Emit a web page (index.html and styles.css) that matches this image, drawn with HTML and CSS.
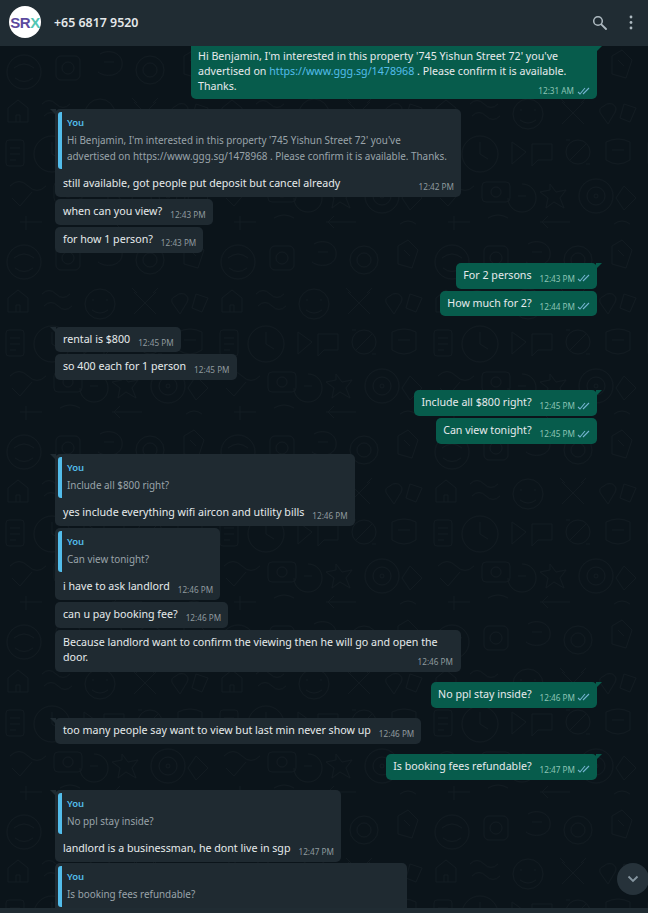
FILE: index.html
```html
<!DOCTYPE html>
<html lang="en">
<head>
<meta charset="utf-8">
<title>Chat</title>
<link rel="stylesheet" href="styles.css">
</head>
<body>
<div class="app">
  <header class="header">
    <div class="avatar"><span class="sr">SR</span><span class="x">X</span></div>
    <div class="name">+65 6817 9520</div>
    <svg class="icon search" viewBox="0 0 15 15" width="15" height="15"><circle cx="6" cy="6" r="4.300" fill="none" stroke="#aebac1" stroke-width="1.500"/><path d="M9.300 9.300l4.700 4.700" stroke="#aebac1" stroke-width="1.800" stroke-linecap="round"/></svg>
    <svg class="icon menu" viewBox="0 0 4 15" width="4" height="15"><circle cx="2" cy="2" r="1.400" fill="#aebac1"/><circle cx="2" cy="7.500" r="1.400" fill="#aebac1"/><circle cx="2" cy="13" r="1.400" fill="#aebac1"/></svg>
  </header>
  <main class="chat">
    <svg class="doodles" width="648" height="862" aria-hidden="true">
      <defs>
        <pattern id="doodle" width="214" height="190" patternUnits="userSpaceOnUse">
          <g fill="none" stroke="#121b21" stroke-width="1">
            <circle cx="24" cy="26" r="17"/><path d="M14 22q10-8 20 0M15 32q9 7 18 0"/>
            <rect x="56" y="10" width="24" height="24" rx="5"/><circle cx="68" cy="22" r="6"/>
            <path d="M100 8c10-6 24 0 22 12-2 10-16 12-24 6M104 16h10"/>
            <circle cx="150" cy="24" r="14"/><circle cx="150" cy="24" r="7"/>
            <path d="M184 10l10-6 10 10-6 18-14-4zM190 14l6 6"/>
            <path d="M8 62l10-8 10 8v14H8zM16 76v-7h4v7"/>
            <path d="M42 58q7-7 14 0t14 0M44 70q7-7 14 0t14 0"/>
            <circle cx="100" cy="68" r="15"/><path d="M92 64h2M106 64h2M92 74q8 6 16 0"/>
            <path d="M134 56l22 22M156 56l-22 22M132 52l5 5M158 52l-5 5"/>
            <path d="M176 60c6-6 16 0 10 8l-6 10-7-10c-2-3-2-6 3-8zM196 58l12 4-6 14-10-4z"/>
            <rect x="6" y="94" width="18" height="26" rx="3"/><path d="M10 102h10M10 108h10M10 114h6"/>
            <circle cx="52" cy="108" r="18"/><path d="M52 96v12l8 5"/>
            <path d="M84 96l14 10-14 12zM104 98h20v16h-14l-6 6z"/>
            <circle cx="150" cy="106" r="12"/><path d="M142 114l16-16M138 94h4M158 118h4"/>
            <path d="M178 96q12-6 24 0v18q-12 8-24 0zM184 104h12"/>
            <path d="M10 140q9-9 18 0t18 0M12 152l8 8 12-14"/>
            <rect x="54" y="136" width="28" height="20" rx="4"/><circle cx="68" cy="146" r="5"/>
            <path d="M94 138c8 0 14 6 14 14s-6 14-14 14-14-6-14-14M90 150h8"/>
            <path d="M122 138l6 8 10-2-6 8 4 10-10-6-8 6 2-10-8-6 10-2z"/>
            <circle cx="168" cy="150" r="17"/><circle cx="168" cy="150" r="9"/><circle cx="168" cy="150" r="2"/>
            <path d="M196 140l12 12-12 12-8-12zM20 176h22M26 170v14M60 172q10-6 20 0M112 176h30M120 170l-6 6 6 6M186 178q8-6 16 0"/>
          </g>
        </pattern>
      </defs>
      <rect width="648" height="862" fill="url(#doodle)"/>
    </svg>
    <div class="thread">
      <section class="group out first">
        <div class="bubble long tail">
          <div class="text">Hi Benjamin, I'm interested in this property '745 Yishun Street 72' you've<br>advertised on <span class="link">https://www.ggg.sg/1478968</span> . Please confirm it is available.<br>Thanks.</div>
          <div class="meta stacked"><span>12:31 AM</span><svg class="ticks" viewBox="0 0 13 8" width="13" height="8"><path d="M1 5l2 2L8 1M6 7l6-6" fill="none" stroke="#74b3d0" stroke-width="1.100"/></svg></div>
        </div>
      </section>

      <section class="group in">
        <div class="bubble reply wide-reply tail">
          <div class="quote"><div class="you">You</div><div class="qtext">Hi Benjamin, I'm interested in this property '745 Yishun Street 72' you've<br>advertised on https://www.ggg.sg/1478968 . Please confirm it is available. Thanks.</div></div>
          <div class="body"><span class="text">still available, got people put deposit but cancel already</span><span class="meta wide">12:42 PM</span></div>
        </div>
        <div class="bubble line"><span class="text">when can you view?</span><span class="meta">12:43 PM</span></div>
        <div class="bubble line"><span class="text">for how 1 person?</span><span class="meta">12:43 PM</span></div>
      </section>

      <section class="group out">
        <div class="bubble line tail"><span class="text">For 2 persons</span><span class="meta">12:43 PM<svg class="ticks" viewBox="0 0 13 8" width="13" height="8"><path d="M1 5l2 2L8 1M6 7l6-6" fill="none" stroke="#74b3d0" stroke-width="1.100"/></svg></span></div>
        <div class="bubble line"><span class="text">How much for 2?</span><span class="meta">12:44 PM<svg class="ticks" viewBox="0 0 13 8" width="13" height="8"><path d="M1 5l2 2L8 1M6 7l6-6" fill="none" stroke="#74b3d0" stroke-width="1.100"/></svg></span></div>
      </section>

      <section class="group in">
        <div class="bubble line tail"><span class="text">rental is $800</span><span class="meta">12:45 PM</span></div>
        <div class="bubble line"><span class="text">so 400 each for 1 person</span><span class="meta">12:45 PM</span></div>
      </section>

      <section class="group out">
        <div class="bubble line tail"><span class="text">Include all $800 right?</span><span class="meta">12:45 PM<svg class="ticks" viewBox="0 0 13 8" width="13" height="8"><path d="M1 5l2 2L8 1M6 7l6-6" fill="none" stroke="#74b3d0" stroke-width="1.100"/></svg></span></div>
        <div class="bubble line"><span class="text">Can view tonight?</span><span class="meta">12:45 PM<svg class="ticks" viewBox="0 0 13 8" width="13" height="8"><path d="M1 5l2 2L8 1M6 7l6-6" fill="none" stroke="#74b3d0" stroke-width="1.100"/></svg></span></div>
      </section>

      <section class="group in">
        <div class="bubble reply tail">
          <div class="quote"><div class="you">You</div><div class="qtext">Include all $800 right?</div></div>
          <div class="body"><span class="text">yes include everything wifi aircon and utility bills</span><span class="meta">12:46 PM</span></div>
        </div>
        <div class="bubble reply">
          <div class="quote"><div class="you">You</div><div class="qtext">Can view tonight?</div></div>
          <div class="body"><span class="text">i have to ask landlord</span><span class="meta">12:46 PM</span></div>
        </div>
        <div class="bubble line"><span class="text">can u pay booking fee?</span><span class="meta">12:46 PM</span></div>
        <div class="bubble long-in">
          <div class="text">Because landlord want to confirm the viewing then he will go and open the<br>door.</div>
          <div class="meta stacked">12:46 PM</div>
        </div>
      </section>

      <section class="group out">
        <div class="bubble line tail"><span class="text">No ppl stay inside?</span><span class="meta">12:46 PM<svg class="ticks" viewBox="0 0 13 8" width="13" height="8"><path d="M1 5l2 2L8 1M6 7l6-6" fill="none" stroke="#74b3d0" stroke-width="1.100"/></svg></span></div>
      </section>

      <section class="group in">
        <div class="bubble line tail"><span class="text">too many people say want to view but last min never show up</span><span class="meta">12:46 PM</span></div>
      </section>

      <section class="group out">
        <div class="bubble line tail"><span class="text">Is booking fees refundable?</span><span class="meta">12:47 PM<svg class="ticks" viewBox="0 0 13 8" width="13" height="8"><path d="M1 5l2 2L8 1M6 7l6-6" fill="none" stroke="#74b3d0" stroke-width="1.100"/></svg></span></div>
      </section>

      <section class="group in tight">
        <div class="bubble reply tail">
          <div class="quote"><div class="you">You</div><div class="qtext">No ppl stay inside?</div></div>
          <div class="body"><span class="text">landlord is a businessman, he dont live in sgp</span><span class="meta">12:47 PM</span></div>
        </div>
        <div class="bubble reply cut">
          <div class="quote"><div class="you">You</div><div class="qtext">Is booking fees refundable?</div></div>
        </div>
      </section>
    </div>
    <div class="scroll-btn"><svg viewBox="0 0 12 8" width="12" height="8"><path d="M1.500 1.500L6 6l4.500-4.500" fill="none" stroke="#8696a0" stroke-width="1.800"/></svg></div>
  </main>
  <div class="footer"></div>
</div>
</body>
</html>
```

FILE: styles.css
```css
* { box-sizing: border-box; }
html, body { margin: 0; padding: 0; height: 100%; }
body {
  background: #0b141a;
  color: #e6eaec;
  font-family: "Noto Sans", "Open Sans", sans-serif;
  font-size: 10.67px;
  line-height: 15px;
  overflow: hidden;
}
.app { width: 648px; height: 913px; display: flex; flex-direction: column; }

.header {
  height: 46px;
  flex: none;
  background: #202c33;
  display: flex;
  align-items: center;
  padding: 0 15px 2px 9px;
}
.avatar {
  width: 32px;
  height: 32px;
  border-radius: 50%;
  background: #fff;
  display: flex;
  align-items: center;
  justify-content: center;
  font-family: "Liberation Sans", sans-serif;
  font-weight: 700;
  font-size: 15px;
  letter-spacing: -.5px;
}
.sr { color: #5c4a9e; }
.x { color: #52c6b4; }
.name { margin-left: 13px; font-size: 12.4px; font-weight: 600; color: #e4e8ea; flex: 1; }
.icon { flex: none; }
.search { margin-right: 22px; }

.chat { flex: 1; min-height: 0; position: relative; overflow: hidden; background: #0b141a; }
.doodles { position: absolute; left: 0; top: 0; }
.thread { position: relative; display: flex; flex-direction: column; gap: 10.3px; padding: 0 51px 0 55px; }

.group { display: flex; flex-direction: column; gap: 2px; }
.group.in { align-items: flex-start; }
.group.out { align-items: flex-end; }
.group.tight { gap: 1px; }

.bubble { position: relative; border-radius: 5px; background: #1f2a31; flex: none; }
.out .bubble { background: #075c4c; }
.bubble.tail::before {
  content: "";
  position: absolute;
  top: 0;
  width: 0;
  height: 0;
  border-top: 6px solid #1f2a31;
}
.in .bubble.tail::before { left: -5px; border-left: 6px solid transparent; }
.out .bubble.tail::before { right: -5px; border-top-color: #075c4c; border-right: 6px solid transparent; }
.first .bubble { border-top-left-radius: 0; border-top-right-radius: 0; }

.line { display: flex; align-items: flex-start; height: 25.7px; padding: 5px 7px 0 8px; }
.line .meta, .body .meta { margin-left: 8px; margin-top: 5px; }
.out .line { padding-left: 7px; }
.out .line .meta { gap: 2px; }

.meta {
  display: inline-flex;
  align-items: center;
  gap: 3px;
  font-size: 8.2px;
  line-height: 11px;
  color: #8f9a9f;
  white-space: nowrap;
}
.out .meta { color: #8cc4b5; }
.ticks { flex: none; }

.long { width: 406px; height: 53px; padding: 3px 7px 0; }
.long-in { width: 406px; height: 42px; padding: 5px 8px 0; }
.stacked { display: flex; justify-content: flex-end; margin-top: -9px; }
.link { color: #53bdeb; }

.reply { height: 72px; padding: 3px 3px 0; }
.reply.wide-reply { width: 406px; height: 88px; }
.reply .body { display: flex; align-items: flex-start; padding: 7px 4px 0 5px; }
.meta.wide { margin-left: auto; }
.quote {
  border-left: 4px solid #53bdeb;
  border-radius: 3px;
  padding: 4px 8px 5px 5px;
}
.you { color: #53bdeb; font-weight: 600; font-size: 9.5px; line-height: 14px; }
.qtext { color: #9aa4aa; font-size: 9.9px; line-height: 16px; margin-top: 2px; }
.reply.cut { width: 352px; height: 60px; }

.scroll-btn {
  position: absolute;
  right: -1px;
  bottom: 13px;
  width: 32px;
  height: 32px;
  border-radius: 50%;
  background: #26323a;
  display: flex;
  align-items: center;
  justify-content: center;
}
.footer { height: 5px; flex: none; background: #202c33; }
```
